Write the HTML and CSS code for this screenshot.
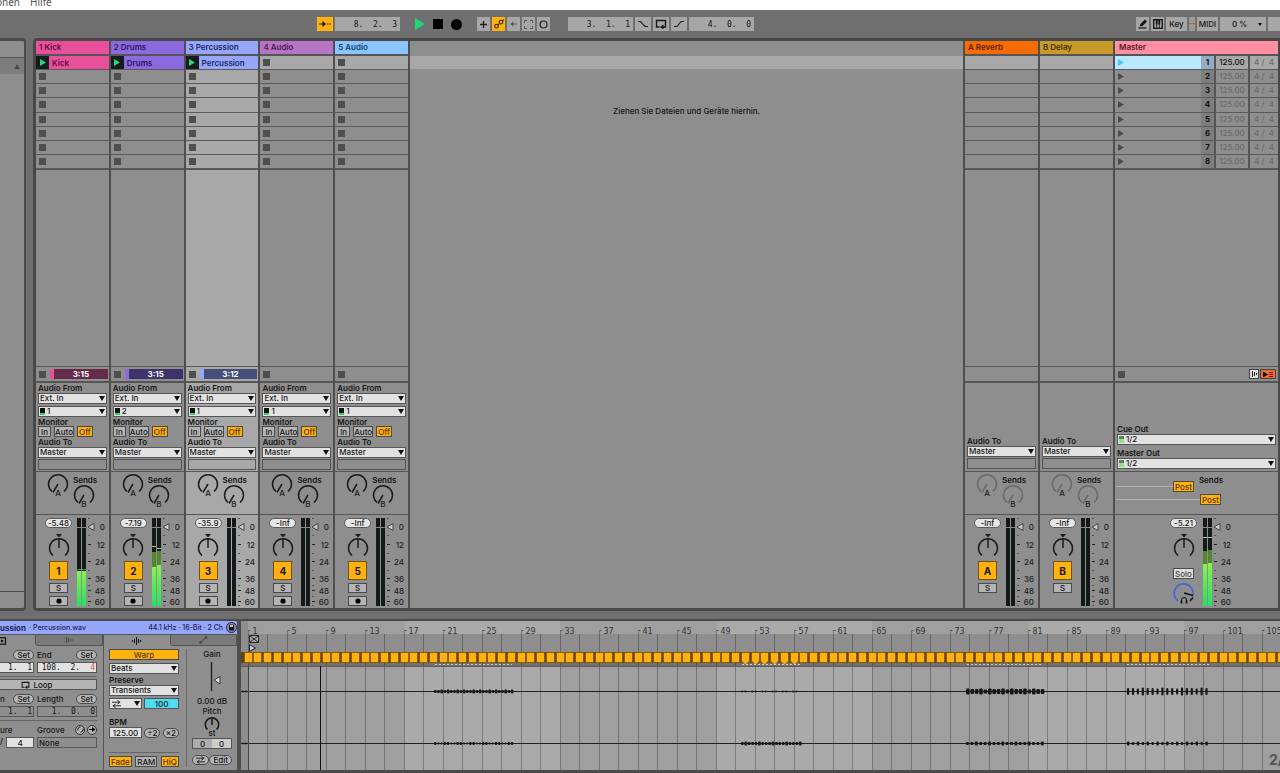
FILE: index.html
```html
<!DOCTYPE html>
<html lang="de">
<head>
<meta charset="utf-8">
<title>Session</title>
<link rel="stylesheet" href="styles.css">
</head>
<body>
<svg class="defs" aria-hidden="true">
  <defs>
    <linearGradient id="level" x1="0" y1="0" x2="0" y2="1">
      <stop offset="0" stop-color="#8af24f"/>
      <stop offset="1" stop-color="#27e062"/>
    </linearGradient>
    <symbol id="i-play" viewBox="0 0 10 12"><path d="M0 0L10 6L0 12Z" fill="currentColor"/></symbol>
    <symbol id="i-loop" viewBox="0 0 12 10"><path d="M4.500 8H1.500V1.500H10.500V8H8" fill="none" stroke="currentColor" stroke-width="1.400"/><path d="M8.500 5.500V10.500L5 8Z" fill="currentColor"/></symbol>
    <symbol id="i-swap" viewBox="0 0 10 8"><path d="M0 2H8M6 0l3 2-3 2M10 6H2M4 4L1 6l3 2" fill="none" stroke="currentColor"/></symbol>
  </defs>
</svg>

<nav class="menu"><span>onen</span><span>Hilfe</span></nav>

<header class="toolbar">
  <div class="group follow">
    <button class="tool on w16" aria-label="Follow"><svg width="12" height="8" viewBox="0 0 12 8"><path d="M0 4H5M8 4H9.500M10.500 4H12" stroke="#222" stroke-width="1.200"/><path d="M3.500 1L7 4L3.500 7Z" fill="#111"/></svg></button>
    <input class="field mono" value="8.  2.  3" aria-label="Position">
  </div>
  <div class="group transport">
    <button class="bare green" aria-label="Play"><svg width="10" height="12"><use href="#i-play"/></svg></button>
    <button class="bare" aria-label="Stop"><svg width="10" height="10"><rect width="10" height="10"/></svg></button>
    <button class="bare" aria-label="Record"><svg width="11" height="11"><circle cx="5.500" cy="5.500" r="5.500"/></svg></button>
  </div>
  <div class="group tight">
    <button class="tool" aria-label="Overdub"><svg width="9" height="9"><path d="M4.500 1V8M1 4.500H8" stroke="#222" stroke-width="1.400"/></svg></button>
    <button class="tool on" aria-label="Automation"><svg width="10" height="10" fill="none" stroke="#4a3000" stroke-width="1.200"><circle cx="2.500" cy="7.200" r="1.800"/><circle cx="7" cy="3.200" r="1.800"/><path d="M3.900 5.900L5.600 4.500M8.300 2L10 .5"/></svg></button>
    <button class="tool" aria-label="Re-enable automation"><svg width="9" height="8" stroke="#5e5e5e"><path d="M4 4H8"/><path d="M4.500 1.500V6.500L1 4Z" fill="#5e5e5e" stroke="none"/></svg></button>
    <button class="tool" aria-label="Capture"><svg width="9" height="9" fill="none" stroke="#555"><path d="M.5 3V.5H3M6 .5H8.500V3M8.500 6V8.500H6M3 8.500H.5V6"/></svg></button>
    <button class="tool" aria-label="Session record"><svg width="9" height="9"><circle cx="4.500" cy="4.500" r="3.500" fill="none" stroke="#222" stroke-width="1.200"/></svg></button>
  </div>
  <div class="group loop">
    <input class="field mono" value="3.  1.  1" aria-label="Loop start">
    <button class="tool w16" aria-label="Punch in"><svg width="12" height="8"><path d="M1 1.500H3.500L8 6.500H11" fill="none" stroke="#222" stroke-width="1.200"/></svg></button>
    <button class="tool w16" aria-label="Loop"><svg width="12" height="10"><use href="#i-loop"/></svg></button>
    <button class="tool w16" aria-label="Punch out"><svg width="12" height="8"><path d="M1 6.500H4L8 1.500H11" fill="none" stroke="#222" stroke-width="1.200"/></svg></button>
    <input class="field mono" value="4.  0.  0" aria-label="Loop length">
  </div>
  <div class="group right">
    <button class="tool" aria-label="Draw"><svg width="10" height="10"><path d="M1.500 7.500L2.500 5L7 0.500L9 2.500L4.500 7Z" fill="#111"/><path d="M0.500 9H8.500" stroke="#111" stroke-width="1.200"/></svg></button>
    <button class="tool" aria-label="Computer keyboard"><svg width="10" height="10"><rect x=".7" y=".7" width="8.600" height="8.600" fill="none" stroke="#111" stroke-width="1.300"/><path d="M3.700 1V5.500M6.300 1V5.500" stroke="#111" stroke-width="1.800"/><path d="M3.700 5V9M6.300 5V9" stroke="#111" stroke-width=".8"/></svg></button>
    <button class="tool key">Key</button>
    <span class="leds"></span>
    <button class="tool midi">MIDI</button>
    <button class="tool cpu">0 %<i class="down"></i></button>
    <span class="edge"></span>
  </div>
</header>

<main class="workspace">
  <aside class="browser">
    <div class="browser-head"></div>
    <div class="browser-bar"><i class="up"></i></div>
    <div class="browser-list"></div>
    <div class="browser-foot"></div>
  </aside>
  <section class="session">
    <div class="tracks" id="tracks"></div>
    <div class="drop"><div class="drop-row"></div><p>Ziehen Sie Dateien und Geräte hierhin.</p></div>
    <div class="returns" id="returns"></div>
    <div class="track master" id="master"></div>
  </section>
</main>

<section class="detail">
  <div class="clip">
    <div class="clip-head"><b>ussion</b><span>· Percussion.wav</span><span class="info">44.1 kHz · 16-Bit · 2 Ch</span>
      <button class="save" aria-label="Save"><svg width="11" height="11"><circle cx="5.500" cy="5.500" r="5" fill="#8e93b5" stroke="#1c2040"/><rect x="3" y="2.500" width="5" height="6" rx="1" fill="#111"/><rect x="4" y="3" width="3" height="2" fill="#ccc"/></svg></button>
    </div>
    <div class="clip-body">
      <div class="pane pane-clip">
        <div class="tabs">
          <button class="tab first" aria-label="Clip"><svg width="7" height="8"><rect x="-1" y=".7" width="6.500" height="6.500" fill="none" stroke="#111" stroke-width="1.200"/><path d="M1 2.500L4 4L1 5.500Z"/></svg></button>
          <button class="tab off" aria-label="Launch"><svg width="8" height="8" stroke="#444"><path d="M1.500 1V7M3.500 2V6M5 4H8"/></svg></button>
        </div>
        <div class="pane-grid">
          <div class="row end"><button class="pill">Set</button></div>
          <div class="row"><label for="end">End</label><button class="pill">Set</button></div>
          <input class="num cut mono" value="1.  1" aria-label="Start">
          <div class="num mono split"><input id="end" value="108.  2."><span class="red">4</span></div>
          <hr>
          <button class="loop-btn"><svg width="9" height="8"><use href="#i-loop"/></svg>Loop</button>
          <div class="row"><span>n</span><button class="pill">Set</button></div>
          <div class="row"><label for="len">Length</label><button class="pill">Set</button></div>
          <input class="num dim cut mono" value="1.  1" aria-label="Position">
          <input class="num dim mono" id="len" value="1.  0.  0">
          <hr>
          <div class="row"><span>ure</span></div>
          <div class="row"><label for="groove">Groove</label><span class="rounds"><button class="round" aria-label="Hot-swap"><svg width="7" height="7" fill="none" stroke="#111"><path d="M1 4.500A2.500 2.500 0 0 1 3.500 1M6 2.500A2.500 2.500 0 0 1 3.500 6"/></svg></button><button class="round" aria-label="Commit"><svg width="7" height="7"><path d="M0 3.500H4" stroke="#111"/><path d="M3 1L6.500 3.500L3 6Z"/></svg></button></span></div>
          <div class="sig"><span>/</span><input class="num mid" value="4" aria-label="Denominator"></div>
          <input class="num dim left" id="groove" value="None">
        </div>
      </div>
      <div class="pane pane-sample">
        <div class="tabs">
          <button class="tab" aria-label="Sample"><svg width="9" height="8" stroke="#111"><path d="M.5 3V5M2.500 2V6M4.500 0V8M6.500 2V6M8.500 3V5"/></svg></button>
          <button class="tab off" aria-label="Envelopes"><svg width="9" height="8"><path d="M1.500 6.500L7 1.500" stroke="#444"/><circle cx="1.500" cy="6.500" r="1.200" fill="#444"/><circle cx="7" cy="1.500" r="1.200" fill="#444"/></svg></button>
        </div>
        <div class="sample">
          <div class="warp">
            <button class="amber warp-btn">Warp</button>
            <span class="sel beats"><select aria-label="Warp mode"><option>Beats</option></select></span>
            <label class="lbl" for="preserve">Preserve</label>
            <span class="sel"><select id="preserve"><option>Transients</option></select></span>
            <div class="pair"><span class="sel mode"><svg width="9" height="8"><use href="#i-swap"/></svg><select aria-label="Loop mode"><option></option></select></span><input class="hundred" value="100" aria-label="Envelope"></div>
            <label class="lbl bpm" for="bpm">BPM</label>
            <div class="pair tempo"><input class="num mid" id="bpm" value="125.00"><button class="pill">÷2</button><button class="pill">×2</button></div>
            <div class="pair opts"><button class="amber">Fade</button><button class="flat">RAM</button><button class="amber">HiQ</button></div>
          </div>
          <div class="gain">
            <span class="lbl2">Gain</span>
            <svg class="slider" width="20" height="37"><path d="M9.500 3V32" stroke="#222" stroke-width="1.400"/><path d="M12 21L18 17.500V25Z" fill="#ddd" stroke="#333"/></svg>
            <span class="lbl2">0.00 dB</span>
            <span class="lbl2">Pitch</span>
            <svg class="pitch" width="20" height="16"><path d="M5.500 13.500A6.700 6.700 0 1 1 14.500 13.500M10 2V9" fill="none" stroke="#1c1c1c" stroke-width="1.600"/></svg>
            <span class="lbl2 st">st</span>
            <div class="semi"><input value="0" aria-label="Semitones"><input value="0" aria-label="Cents"></div>
            <div class="pair edit"><button class="pill" aria-label="Reverse"><svg width="9" height="8"><use href="#i-swap"/></svg></button><button class="pill">Edit</button></div>
          </div>
        </div>
      </div>
    </div>
  </div>
  <div class="wave"><svg id="wave" width="100%" height="149"></svg></div>
</section>
<script src="app.js"></script>
</body>
</html>
```

FILE: styles.css
```css
* { box-sizing: border-box; }
body {
  margin: 0; height: 100vh; min-height: 640px; display: flex; flex-direction: column; overflow: hidden;
  background: #6f6f6f; color: #161616;
  font: 500 8px/10px Inter, "Noto Sans", sans-serif;
}
button, input, select { font: inherit; color: inherit; margin: 0; padding: 0; border: 0; border-radius: 0; background: none; appearance: none; min-width: 0; }
button { display: flex; align-items: center; justify-content: center; white-space: nowrap; }
svg { display: block; flex: none; }
p { margin: 0; }
.defs { position: absolute; width: 0; height: 0; }
.mono { font-family: "DejaVu Sans Mono", "Liberation Mono", monospace; font-weight: 400; text-align: right; white-space: pre; }

.menu { height: 10px; flex: none; background: #fff; color: #555; font: 10px/5px "Noto Sans", sans-serif; display: flex; gap: 10px; overflow: hidden; margin-left: -4px; }

.toolbar { height: 28px; flex: none; display: flex; align-items: center; }
.group { display: flex; gap: 2px; align-items: center; height: 14px; }
.follow { margin-left: 317px; }
.transport { margin-left: 15px; gap: 8px; }
.tight { margin-left: 15px; }
.loop { margin-left: 18px; }
.right { margin-left: auto; }
.tool { height: 14px; width: 13px; background: #a6a6a6; }
.tool.on, .amber { background: #ffb10d; }
.tool.w16 { width: 16px; }
.field { height: 14px; width: 65px; background: #a6a6a6; padding-right: 3px; }
.bare { height: 14px; }
.green { color: #1fd679; }
.tool.key { width: 21px; }
.leds { width: 6px; height: 14px; background: linear-gradient(#999 6px, #8a7a5a 6px, #8a7a5a 7px, #999 7px); }
.tool.midi { width: 21px; }
.tool.cpu { width: 46px; justify-content: space-between; padding: 0 4px 0 12px; }
.edge { width: 12px; height: 14px; background: #a6a6a6; }
.down { border: 2px solid transparent; border-top: 3px solid #111; border-bottom: 0; }

.workspace { flex: 1; min-height: 0; display: flex; gap: 7px; }
.browser { width: 26px; flex: none; display: flex; flex-direction: column; border: solid #4c4c4c; border-width: 3px 2px 3px 0; border-radius: 0 4px 4px 0; background: #8e8e8e; }
.browser-head { height: 17px; border-bottom: 1px solid #555; }
.browser-bar { height: 16px; background: #7d7d7d; padding: 6px 0 0 14px; }
.up { display: block; width: 6px; border: 3px solid transparent; border-bottom: 5px solid #4a4a4a; border-top: 0; }
.browser-list { flex: 1; }
.browser-foot { height: 17px; border-top: 1px solid #4c4c4c; }

.session { flex: 1; min-width: 0; display: grid; grid-template-columns: 372px minmax(0, 1fr) 148px 163px; gap: 2px; background: #4f4f4f; border: solid #484848; border-width: 3px 2px 3px 3px; border-radius: 4px 0 0 4px; }
.tracks, .returns { display: grid; grid-auto-flow: column; grid-auto-columns: minmax(0, 1fr); gap: 2px; }
.track { display: flex; flex-direction: column; min-width: 0; background: #8e8e8e; }
.track.selected { background: #a8a8a8; }
.drop { background: #8e8e8e; text-align: center; padding-top: 15px; }
.drop-row { height: 13px; background: #a8a8a8; margin-bottom: 37px; }
.title { height: 15px; line-height: 13px; border-bottom: 2px solid #555; padding-left: 3px; color: var(--ink); background: var(--tint); font-weight: 600; flex: none; }
.slots { height: 113px; flex: none; display: grid; grid-auto-rows: 1fr; }
.slot { border-bottom: 1px solid #5a5a5a; display: flex; align-items: center; padding-left: 3px; }
.slot.live { background: #a8a8a8; }
.slot.clip-slot { padding: 0; background: var(--tint); color: var(--ink); gap: 3px; font-weight: 600; }
.launch { width: 13px; height: 13px; background: #151c1c; color: #27d983; }
.stop { width: 7px; height: 7px; background: #4f4f4f; }
.void { flex: 1; border-top: 1px solid #555; border-bottom: 1px solid #5a5a5a; }
.status { height: 14px; flex: none; display: flex; align-items: center; padding: 0 1px 0 3px; gap: 4px; }
.time { flex: 1; height: 10px; text-align: center; color: #fff; font-weight: 700; background: var(--deep); border-left: 4px solid var(--tint); }
.io { height: 91px; flex: none; border-top: 2px solid #555; border-bottom: 1px solid #555; padding: 0 2px 2px; display: flex; flex-direction: column; }
.io.low { justify-content: flex-end; }
.lbl { height: 10px; flex: none; display: block; font-weight: 600; }
.lbl.short { height: 9px; }
.sel { position: relative; display: flex; height: 11px; flex: none; background: #e2e2e2; border: 1px solid #555; align-items: center; overflow: hidden; }
.sel select { flex: 1; height: 9px; line-height: 9px; padding-left: 1px; }
.sel::after { content: ""; position: absolute; right: 1px; top: 2px; border: 3px solid transparent; border-top: 5px solid #111; border-bottom: 0; pointer-events: none; }
.sel + .sel { margin-top: 2px; }
.chan { width: 5px; height: 7px; margin: 0 1px; background: linear-gradient(#111 5px, #35d070 5px); }
.chan.out { background: linear-gradient(#5c7a5c 3px, #8fe08a 3px); }
.monitor { display: flex; gap: 3px; height: 11px; flex: none; }
.monitor button, .flat, .amber, .post, .solo { border: 1px solid #4a4a4a; height: 11px; padding: 0 2px; background: #b4b4b4; }
.monitor button { padding: 0; min-width: 13px; }
.monitor .amber { min-width: 16px; }
.monitor .amber, .amber { background: #ffb10d; color: #5a3500; }
.slim { height: 11px; flex: none; border: 1px solid #555; margin-top: 1px; }

.sends { height: 43px; flex: none; border-bottom: 1px solid #555; display: flex; gap: 4px; padding: 2px 0 0 11px; font-weight: 600; }
.sends .second { padding-top: 1px; }
.sends .second span { display: block; height: 10px; }
.knob { overflow: visible; }
.knob text, .meter text { font: 500 8px Inter, sans-serif; fill: #222; }
.faint path { stroke: #6a6a6a; }
.mixer { height: 93px; flex: none; display: flex; gap: 5px; padding: 3px 0 0 9px; }
.strip { width: 27px; display: flex; flex-direction: column; align-items: center; }
.vol { width: 27px; height: 10px; line-height: 9px; border: 1px solid #5c5c5c; border-radius: 5px; background: #e6e6e6; text-align: center; margin-bottom: 4px; flex: none; }
.act { width: 19px; height: 19px; border: 1px solid #70511a; background: #ffb10d; font-size: 10px; font-weight: 700; margin-top: 1px; flex: none; }
.small { width: 19px; height: 10px; border: 1px solid #4a4a4a; background: #b4b4b4; margin-top: 3px; flex: none; }

.master .title { padding-left: 4px; }
.master .slot { padding: 0; color: #6b6b6b; align-items: stretch; }
.scene { flex: 1; display: flex; align-items: center; justify-content: flex-start; padding-left: 3px; color: #4a4a4a; }
.num-cell { width: 13px; background: #7e7e7e; text-align: center; font-weight: 700; line-height: 13px; color: #111; }
.bpm-cell, .sig-cell { line-height: 13px; border-left: 2px solid #555; text-align: center; white-space: pre; }
.bpm-cell { width: 34px; }
.sig-cell { width: 30px; }
.live .scene { background: #b9e8ff; color: #3fcdf0; }
.live .num-cell { background: #94adc4; }
.live .bpm-cell { color: #111; }
.master .status { justify-content: space-between; padding-right: 2px; }
.toggles { display: flex; gap: 1px; }
.toggles button { height: 10px; width: 10px; border: 1px solid #444; background: #ddd; }
.toggles .orange { width: 16px; background: #f26a3a; }
.cue { margin-bottom: 3px; }
.master .sends { padding: 2px 0 0 1px; display: grid; grid-template-columns: 57px 27px 22px; grid-template-rows: 10px 14px 11px; gap: 0; }
.send-name { grid-column: 3; grid-row: 1; justify-self: center; padding-top: 1px; }
.post { width: 21px; padding: 0; background: #ffb10d; color: #5a3500; font-weight: 500; }
.post.a { grid-column: 2; grid-row: 2; align-self: start; margin-top: -3px; }
.post.b { grid-column: 3; grid-row: 2 / 4; align-self: start; margin-top: 10px; }
.wire { height: 1px; background: #b2b2b2; }
.wire.a { grid-column: 1; grid-row: 2; margin-top: 2px; }
.wire.b { grid-column: 1 / 3; grid-row: 2 / 4; margin-top: 15px; }
.master .mixer { padding-left: 55px; gap: 6px; }
.solo { width: 21px; padding: 0; margin: 8px 0 2px; background: #ddd; color: #444; flex: none; }

.detail { height: 154px; flex: none; margin-top: 8px; display: flex; gap: 2px; border: solid #4a4a4a; border-width: 2px 0 3px; background: #4f4f4f; }
.clip { width: 239px; flex: none; display: flex; flex-direction: column; background: #8e8e8e; border-right: 2px solid #4f4f4f; }
.clip-head { height: 13px; flex: none; background: #95a6fb; color: #1b245c; display: flex; align-items: center; gap: 3px; font-size: 7px; border-radius: 0 3px 0 0; }
.clip-head b { font-size: 8px; }
.info { margin-left: auto; }
.clip-body { flex: 1; display: flex; }
.pane-clip { width: 104px; border-right: 1px solid #555; }
.pane-sample { flex: 1; }
.tabs { display: flex; height: 12px; }
.tab { flex: 1; height: 12px; border-top: 1px solid #555; }
.tab.off { background: #7a7a7a; border: 1px solid #555; border-radius: 0 0 0 3px; }
.tab.first { flex: 0 0 35px; justify-content: flex-start; }
.pane-grid { display: grid; grid-template-columns: 34px 60px; column-gap: 3px; padding-top: 2px; }
.row { height: 13px; display: flex; justify-content: space-between; align-items: center; }
.row.end { justify-content: flex-end; }
.pill { height: 10px; border: 1px solid #4a4a4a; border-radius: 5px; background: #b4b4b4; padding: 0 3px; }
.num { height: 11px; width: 100%; border: 1px solid #555; background: #e2e2e2; padding-right: 1px; }
.pane-grid .num { margin-top: 1px; }
.num.dim { background: #8e8e8e; }
.num.cut { border-left: 0; }
.split { display: flex; justify-content: flex-end; align-items: center; gap: 10px; }
.split input { width: 46px; text-align: right; height: 9px; }
.red { color: #e2583e; }
.num.mid { text-align: center; padding: 0; }
.left { padding-left: 1px; }
.pane-grid hr { grid-column: 1 / 3; width: 100%; height: 1px; margin: 3px 0 2px; border: 0; background: #666; }
.loop-btn { grid-column: 1 / 3; height: 11px; border: 1px solid #555; border-left: 0; background: #b4b4b4; gap: 3px; margin-bottom: 2px; padding-right: 22px; }
.rounds { display: flex; gap: 2px; }
.round { width: 10px; height: 10px; border: 1px solid #333; border-radius: 5px; background: #b4b4b4; }
.sig { display: flex; justify-content: space-between; }
.sig .num { width: 28px; }

.sample { display: flex; padding: 3px 0 0 5px; }
.warp { width: 78px; padding-right: 7px; border-right: 1px solid #666; display: flex; flex-direction: column; height: 118px; }
.warp-btn { flex: none; height: 11px; }
.warp .beats { margin: 3px 0 1px; }
.pair { display: flex; justify-content: space-between; align-items: center; }
.warp .pair { margin-top: 2px; }
.mode { width: 33px; padding-left: 2px; }
.hundred { width: 35px; height: 11px; border: 1px solid #555; background: #4fdcf2; text-align: center; }
.warp .bpm { margin-top: 8px; }
.warp .tempo { margin-top: 0; }
.warp .tempo .num { width: 33px; }
.tempo .pill { padding: 0 2px; }
.warp .opts { margin-top: auto; border-top: 1px solid #666; padding-top: 3px; }
.opts button { padding: 0 1px; }
.gain { flex: 1; display: flex; flex-direction: column; align-items: center; }
.lbl2 { height: 10px; }
.pitch { margin-bottom: -2px; }
.lbl2.st { height: 8px; line-height: 7px; }
.semi { width: 40px; height: 11px; border: 1px solid #555; display: flex; background: #ccc; }
.semi input { width: 50%; text-align: center; }
.semi input:first-child { background: #adadad; }
.edit { width: 40px; margin-top: 6px; }

.wave { flex: 1; min-width: 0; background: #8e8e8e; overflow: hidden; }
.ruler { font: 500 8px "DejaVu Sans", Inter, sans-serif; fill: #333; }
.tempo-sig { font: 700 14px Inter, sans-serif; fill: #555; }
```

FILE: app.js
```javascript
const ARC = 'M5 17.500A9.500 9.500 0 1 1 17 17.500';
const EMPTY = '<div class="slot"><button class="stop" aria-label="Stop"></button></div>';

function sendKnob(letter, faint) {
  return `<svg class="knob ${faint ? 'faint' : ''}" width="22" height="25">
    <path d="${ARC}M11 10L6 18.500" fill="none" stroke="#1c1c1c" stroke-width="1.500"/>
    <text x="11" y="22" text-anchor="middle">${letter}</text></svg>`;
}

function panKnob() {
  return `<svg width="24" height="28"><path d="M9 2H15L12 5.500Z" fill="#1c1c1c"/>
    <path d="M6 23.500A9.500 9.500 0 1 1 18 23.500M12 6V16" fill="none" stroke="#1c1c1c" stroke-width="1.500"/></svg>`;
}

function meter(levels) {
  const marks = [[9, '0'], [27, '12'], [44, '24'], [61, '36'], [73, '48'], [84, '60']];
  const bars = [0, 5].map((x, i) => {
    let s = `<rect x="${x}" y="0" width="4" height="88" fill="#151818"/>`;
    const l = levels && levels[i];
    if (l) {
      s += `<rect x="${x}" y="${l.rms}" width="4" height="${88 - l.rms}" fill="url(#level)"/>`;
      s += `<rect x="${x}" y="${l.peak}" width="4" height="${l.rms - l.peak}" fill="#54852f"/>`;
      s += `<rect x="${x}" y="${l.hold}" width="4" height="1" fill="${l.tone || '#a9c99a'}"/>`;
    }
    return s;
  }).join('');
  const ticks = [0, 17, 35, 52, 67, 78, 87].map(y => `<path d="M11 ${y + .5}H13" stroke="#555"/>`).join('') +
    marks.slice(1).map(([y]) => `<path d="M11 ${y - .5}H14" stroke="#222"/>`).join('');
  return `<svg class="meter" width="30" height="90">${bars}<path d="M0 9.500H9" stroke="#888"/>${ticks}
    <path d="M11 9L17 5.500V12.500Z" fill="#ccc" stroke="#444"/>
    ${marks.map(([y, t]) => `<text x="28" y="${y + 3}" text-anchor="end">${t}</text>`).join('')}</svg>`;
}

const select = (label, value, icon = '') =>
  `<span class="sel">${icon}<select aria-label="${label}"><option>${value}</option></select></span>`;

function track(t) {
  const first = t.clip
    ? `<div class="slot clip-slot"><button class="launch" aria-label="Launch"><svg width="6" height="7"><use href="#i-play"/></svg></button>${t.clip}</div>`
    : '<div class="slot live"><button class="stop" aria-label="Stop"></button></div>';
  return `<section class="track ${t.selected ? 'selected' : ''}" style="--tint:${t.tint};--ink:${t.ink};--deep:${t.deep}">
    <div class="title">${t.name}</div><div class="slots">${first}${EMPTY.repeat(7)}</div><div class="void"></div>
    <div class="status"><button class="stop" aria-label="Stop"></button>${t.time ? `<div class="time">${t.time}</div>` : ''}</div>
    <div class="io"><span class="lbl">Audio From</span>${select('Audio From', 'Ext. In')}${select('Input', t.input, '<i class="chan"></i>')}
      <span class="lbl short">Monitor</span><div class="monitor"><button>In</button><button>Auto</button><button class="amber">Off</button></div>
      <span class="lbl">Audio To</span>${select('Audio To', 'Master')}<div class="slim"></div></div>
    <div class="sends">${sendKnob('A')}<div class="second"><span>Sends</span>${sendKnob('B')}</div></div>
    <div class="mixer"><div class="strip"><div class="vol">${t.vol}</div>${panKnob()}
      <button class="act">${t.id}</button><button class="small">S</button>
      <button class="small" aria-label="Arm"><svg width="6" height="6"><circle cx="3" cy="3" r="2.600"/></svg></button></div>${meter(t.levels)}</div>
  </section>`;
}

function returnTrack(t) {
  return `<section class="track" style="--tint:${t.tint};--ink:${t.ink}">
    <div class="title">${t.name}</div><div class="slots"><div class="slot live"></div>${'<div class="slot"></div>'.repeat(7)}</div><div class="void"></div>
    <div class="status"></div>
    <div class="io low"><span class="lbl">Audio To</span>${select('Audio To', 'Master')}<div class="slim"></div></div>
    <div class="sends">${sendKnob('A', true)}<div class="second"><span>Sends</span>${sendKnob('B', true)}</div></div>
    <div class="mixer"><div class="strip"><div class="vol">-Inf</div>${panKnob()}
      <button class="act">${t.id}</button><button class="small">S</button></div>${meter()}</div>
  </section>`;
}

document.getElementById('tracks').innerHTML = [
  { id: 1, name: '1 Kick', clip: 'Kick', tint: '#e8509b', ink: '#5c1038', deep: '#662a4b', time: '3:15', input: '1', vol: '-5.48',
    levels: [{ rms: 53, peak: 53, hold: 51, tone: '#4c8a30' }, { rms: 53, peak: 53, hold: 51, tone: '#4c8a30' }] },
  { id: 2, name: '2 Drums', clip: 'Drums', tint: '#8a6ade', ink: '#2a1763', deep: '#40326b', time: '3:15', input: '2', vol: '-7.19',
    levels: [{ rms: 49, peak: 34, hold: 28 }, { rms: 47, peak: 33, hold: 30 }] },
  { id: 3, name: '3 Percussion', clip: 'Percussion', tint: '#95a6fb', ink: '#1f2a6b', deep: '#454f78', time: '3:12', input: '1', vol: '-35.9', selected: true },
  { id: 4, name: '4 Audio', tint: '#b674c4', ink: '#481b55', input: '1', vol: '-Inf' },
  { id: 5, name: '5 Audio', tint: '#8ac5ff', ink: '#17406b', input: '1', vol: '-Inf' },
].map(track).join('');

document.getElementById('returns').innerHTML = [
  { id: 'A', name: 'A Reverb', tint: '#f76b00', ink: '#572100' },
  { id: 'B', name: 'B Delay', tint: '#c8992b', ink: '#4a3300' },
].map(returnTrack).join('');

const master = document.getElementById('master');
master.style.setProperty('--tint', '#ff8fa3');
master.style.setProperty('--ink', '#5a1a28');
master.innerHTML = `<div class="title">Master</div>
  <div class="slots">${[1, 2, 3, 4, 5, 6, 7, 8].map(n => `<div class="slot ${n === 1 ? 'live' : ''}"><button class="scene" aria-label="Scene ${n}"><svg width="6" height="7"><use href="#i-play"/></svg></button><span class="num-cell">${n}</span><span class="bpm-cell">125.00</span><span class="sig-cell">4 /  4</span></div>`).join('')}</div>
  <div class="void"></div>
  <div class="status"><button class="stop" aria-label="Stop all"></button><span class="toggles"><button aria-label="Resume"><svg width="7" height="8" stroke="#222"><path d="M1.500 1V7M3.500 2V6M5.500 3V5"/></svg></button><button class="orange" aria-label="Back to arrangement"><svg width="12" height="7"><path d="M1 .5L6 3.500L1 6.500Z" fill="#111"/><path d="M7 1.500H11M7 3.500H11M7 5.500H11" stroke="#5a1500" stroke-width=".9"/></svg></button></span></div>
  <div class="io low"><span class="lbl">Cue Out</span>${select('Cue Out', '1/2', '<i class="chan out"></i>')}<span class="cue"></span>
    <span class="lbl">Master Out</span>${select('Master Out', '1/2', '<i class="chan out"></i>')}</div>
  <div class="sends"><span class="send-name">Sends</span><i class="wire a"></i><button class="post a">Post</button><i class="wire b"></i><button class="post b">Post</button></div>
  <div class="mixer"><div class="strip"><div class="vol">-5.21</div>${panKnob()}<button class="solo">Solo</button>
    <svg width="24" height="25"><path d="M6 20A9.500 9.500 0 1 1 21 14" fill="none" stroke="#4169d8" stroke-width="1.800"/>
      <path d="M12 12L21 14.500M21 16.500L18 20" fill="none" stroke="#111" stroke-width="1.500"/>
      <path d="M9.500 21V19A2.500 2.500 0 0 1 14.500 19V21" fill="none" stroke="#111"/><path d="M9.500 19.500V22.500M14.500 19.500V22.500" stroke="#111" stroke-width="1.800"/></svg></div>
    ${meter([{ rms: 46, peak: 33, hold: 19 }, { rms: 45, peak: 32, hold: 19 }])}</div>`;

// Sample display: positions are derived from the bar number
const BAR = 9.75;
const bx = bar => 7.5 + (bar - 1) * BAR;
const wave = document.getElementById('wave');

function hits(from, to, step, y, sizes, width) {
  let s = '';
  for (let x = from, i = 0; x < to; x += step, i++) {
    const h = sizes[i % sizes.length];
    s += `<rect x="${x.toFixed(1)}" y="${y + .5 - h / 2}" width="${width}" height="${h}" rx="1" fill="#151818"/>`;
  }
  return s;
}

function drawWave() {
  const total = wave.clientWidth;
  let w = '<rect width="100%" height="149" fill="#9f9f9f"/>';
  [17, 49, 81].forEach(b => { w += `<rect x="${bx(b)}" y="0" width="${BAR * 16}" height="149" fill="#aaaaaa"/>`; });
  w += '<rect width="7" height="149" fill="#000" opacity=".1"/>';
  w += '<rect y="13" width="100%" height="19" fill="#8e8e8e"/><rect y="31" width="100%" height="14" fill="#707070"/>';
  for (let b = 1; bx(b) < total; b += 2) {
    const x = Math.round(bx(b)) - .5;
    const beat = b % 4 === 1;
    w += `<path d="M${x} ${beat ? 9 : 13}V149" stroke="#000" stroke-opacity=".28"/>`;
    if (beat) w += `<path d="M${x} 9.500H${x + 2}" stroke="#555"/><text class="ruler" x="${x + 4}" y="13">${b}</text>`;
  }
  w += '<rect y="31" width="100%" height="11" fill="#5d4414"/><path d="M0 45.500H5000" stroke="#5c5c5c"/>';
  for (let b = 1; bx(b) < total + 6; b++) {
    const x = Math.round(bx(b)) - 4;
    const pin = b >= 52 && b <= 57;
    w += `<rect x="${x - 1}" y="31" width="9" height="11" fill="#8a5c08"/>`;
    w += pin ? `<path d="M${x} 32H${x + 7}V40L${x + 3.5} 43.500L${x} 40Z" fill="#ffb10d"/>`
      : `<rect x="${x}" y="32" width="7" height="9" fill="#ffb10d"/>`;
  }
  w += '<path d="M0 70.500H5000M0 122.500H5000" stroke="#1e2222"/>';
  w += hits(193, 270, 3.2, 70, [3, 3, 4, 3, 4], 2.6) + hits(193, 270, 3.2, 122, [3, 2, 2, 3], 2.4);
  w += hits(500, 558, 3.4, 70, [2, 2, 1], 2) + hits(500, 558, 3.4, 122, [3, 4, 3, 3], 2.8);
  w += hits(725, 801, 4.4, 70, [6, 5, 5, 6, 4], 3.6) + hits(725, 801, 4.4, 122, [3, 3, 4], 3);
  w += hits(886, 968, 4.9, 70, [7, 7, 6, 8], 2.2) + hits(886, 968, 4.9, 122, [4, 3], 2.4);
  w += hits(1, 6, 3, 70, [2], 2) + hits(1, 6, 3, 122, [2], 2);
  [[194, 271], [501, 559], [726, 801], [886, 968]].forEach(([a, b]) => { w += `<path d="M${a} 43.500H${b}" stroke="#ccc" stroke-dasharray="2 2"/>`; });
  w += '<path d="M79.500 45V149" stroke="#111"/><path d="M7.500 45V149" stroke="#444"/>';
  w += '<g fill="none" stroke="#222"><path d="M8.500 14.500H17.500V21.500H8.500Z" fill="#aaa"/><path d="M9 15L13 18L9 21M17 15L13 18L17 21"/><path d="M8.500 23.500L14.500 27L8.500 30.500Z" fill="#ccc"/></g>';
  w += `<text class="tempo-sig" x="${total - 11}" y="144">2/</text>`;
  wave.innerHTML = w;
}
drawWave();
window.addEventListener('resize', drawWave);
```
